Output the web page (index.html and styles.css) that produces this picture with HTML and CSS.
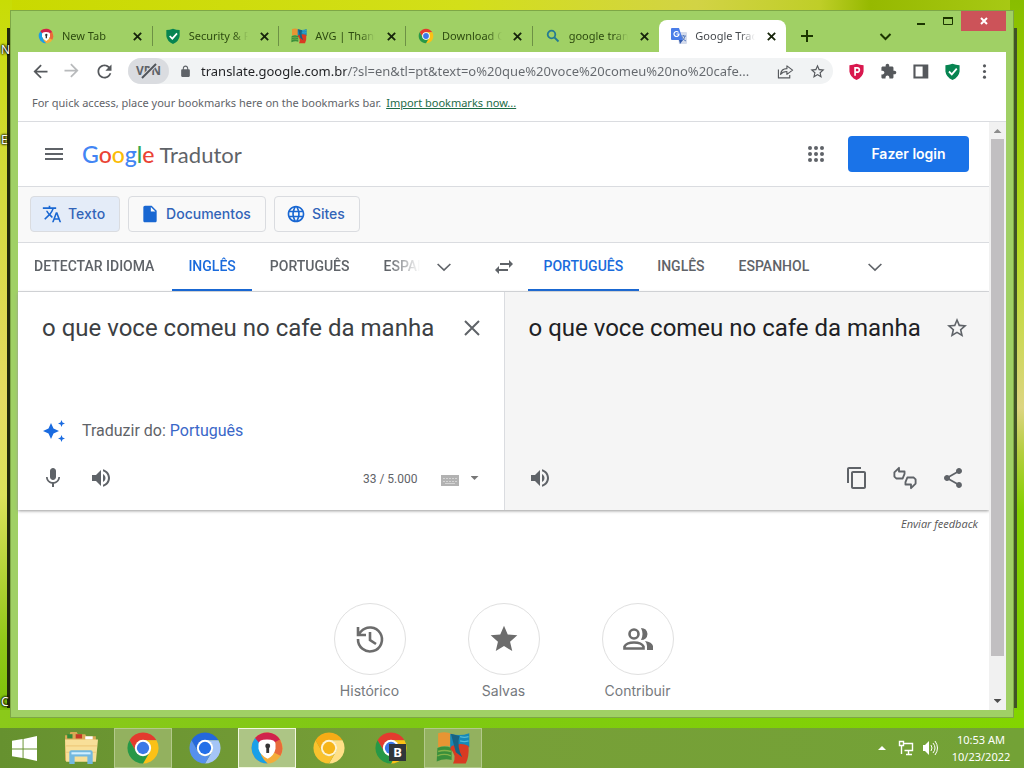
FILE: index.html
```html
<!DOCTYPE html>
<html lang="pt-BR">
<head>
<meta charset="utf-8">
<title>Google Tradutor</title>
<meta name="viewport" content="width=device-width, initial-scale=1">
<link rel="stylesheet" href="styles.css">
</head>
<body>
<svg class="sprite" aria-hidden="true">
  <symbol id="close" viewBox="0 0 24 24"><path d="M4 4l16 16M20 4L4 20" fill="none" stroke="currentColor" stroke-width="4"/></symbol>
  <symbol id="down" viewBox="0 0 24 24"><path d="M3.500 8l8.500 8 8.500-8" fill="none" stroke="currentColor" stroke-width="2.200"/></symbol>
  <symbol id="arrow" viewBox="0 0 24 24"><path d="M20 11H7.830l5.590-5.590L12 4l-8 8 8 8 1.410-1.410L7.830 13H20z"/></symbol>
  <symbol id="wheel" viewBox="0 0 48 48">
    <path d="M24 13H43.050A22 22 0 0 0 4.950 13L14.470 29.500A11 11 0 0 1 24 13z" fill="var(--a)"/>
    <path d="M24 13H43.050A22 22 0 0 0 4.950 13L14.470 29.500A11 11 0 0 1 24 13z" fill="var(--b)" transform="rotate(120 24 24)"/>
    <path d="M24 13H43.050A22 22 0 0 0 4.950 13L14.470 29.500A11 11 0 0 1 24 13z" fill="var(--c)" transform="rotate(240 24 24)"/>
    <circle cx="24" cy="24" r="11.500" fill="var(--ring)"/><circle cx="24" cy="24" r="8.700" fill="var(--core)"/>
  </symbol>
  <symbol id="secure" viewBox="0 0 48 48">
    <circle cx="24" cy="24" r="22" fill="#f3ad3a"/>
    <path d="M7 10A22 22 0 0 1 43 13L36 20Q24 8 12 18z" fill="#d0234c"/>
    <path d="M7 10Q-3 24 7 38Q14 46 25 46Q12 36 14 18z" fill="#18a0e8"/>
    <path d="M42 12Q49 24 43 35L33 30L35 16z" fill="#e86a3b"/>
    <path d="M12 18Q12 12 24 12Q36 12 36 18V25Q34 35 25 39Q14 34 12 25z" fill="#fff"/>
    <circle cx="25" cy="21" r="3.500" fill="#333"/><path d="M23 22h4v9h-4z" fill="#333"/>
  </symbol>
  <symbol id="shield" viewBox="0 0 24 24"><path d="M12 1Q17 3 22 3V12Q21 20 12 24Q3 20 2 12V3Q7 3 12 1z" fill="var(--a)"/></symbol>
  <symbol id="avg" viewBox="0 0 48 48">
    <path d="M3 3Q14 0 22 4V22Q13 19 3 23z" fill="#e89533"/><path d="M20 4Q34 8 47 3V23Q36 21 20 24z" fill="#1689b8"/>
    <path d="M2 24Q12 20 22 24V41Q12 38 1 43z" fill="#398f3b"/><path d="M22 21Q36 16 46 21Q47 36 42 46H24Q30 34 20 25z" fill="#d93a22"/>
    <path d="M21 4L33 7Q29 22 37 37L28 30z" fill="#186282"/>
    <path d="M3 29Q12 26 21 29M2 35Q12 31 21 35" stroke="#83b349" stroke-width="2" fill="none"/>
    <path d="M34 8Q40 10 46 8M34 14Q40 16 46 14" stroke="#52bad5" stroke-width="2" fill="none"/>
  </symbol>
  <symbol id="star-line" viewBox="0 0 24 24"><path d="M22 9.240l-7.190-.620L12 2 9.190 8.630 2 9.240l5.460 4.730L5.820 21 12 17.270 18.180 21l-1.630-7.030L22 9.240zM12 15.400l-3.760 2.270 1-4.280-3.320-2.880 4.380-.380L12 6.100l1.710 4.040 4.380.380-3.320 2.880 1 4.280L12 15.400z"/></symbol>
  <symbol id="volume" viewBox="0 0 24 24"><path d="M3 9v6h4l5 5V4L7 9H3zm13.500 3c0-1.770-1.020-3.290-2.500-4.030v8.050c1.480-.730 2.500-2.250 2.500-4.020zM14 3.230v2.060c2.890.860 5 3.540 5 6.710s-2.110 5.850-5 6.710v2.060c4.010-.910 7-4.490 7-8.770s-2.990-7.860-7-8.770z"/></symbol>
</svg>

<div class="desktop">
  <div class="backdrop" aria-hidden="true"></div>
  <span class="desk-label label-one">N</span>
  <span class="desk-label label-two">E</span>
  <span class="desk-label label-three">C</span>

  <section class="window">
    <header class="titlebar">
      <div class="tabs" role="tablist">
        <div class="tab" role="tab"><svg class="favicon"><use href="#secure"/></svg><span class="tab-title">New Tab</span><button class="tab-close" aria-label="Close tab"><svg><use href="#close"/></svg></button></div>
        <div class="tab" role="tab"><svg class="favicon green-shield" viewBox="0 0 24 24"><use href="#shield"/><path d="M7 12l4 4 7-8" fill="none" stroke="#fff" stroke-width="2.500"/></svg><span class="tab-title">Security &amp; F</span><button class="tab-close" aria-label="Close tab"><svg><use href="#close"/></svg></button></div>
        <div class="tab" role="tab"><svg class="favicon"><use href="#avg"/></svg><span class="tab-title">AVG | Thank</span><button class="tab-close" aria-label="Close tab"><svg><use href="#close"/></svg></button></div>
        <div class="tab" role="tab"><svg class="favicon chrome"><use href="#wheel"/></svg><span class="tab-title">Download C</span><button class="tab-close" aria-label="Close tab"><svg><use href="#close"/></svg></button></div>
        <div class="tab no-line" role="tab"><svg class="favicon" viewBox="0 0 16 16" fill="none" stroke="#247b92" stroke-width="1.800"><circle cx="6.500" cy="6.500" r="3.800"/><path d="M9.500 9.500l4 4"/></svg><span class="tab-title">google trans</span><button class="tab-close" aria-label="Close tab"><svg><use href="#close"/></svg></button></div>
        <div class="tab active" role="tab" aria-selected="true"><svg class="favicon" viewBox="0 0 16 16"><path d="M6 4h9q1 0 1 1v10q0 1-1 1H8z" fill="#d5dcec"/><path d="M1 0h7l4 12H1q-1 0-1-1V1q0-1 1-1z" fill="#4a7de8"/><path d="M8 12h4l-3 4z" fill="#3059ac"/><path d="M7.500 4.500A2.500 2.500 0 1 0 8 6H5.500" fill="none" stroke="#fff" stroke-width="1.200"/><path d="M10 8h5M12.500 7v1M14 8q-1 4-3 5M11 9q1 3 4 4" stroke="#5b7ebe" fill="none"/></svg><span class="tab-title">Google Trad</span><button class="tab-close" aria-label="Close tab"><svg><use href="#close"/></svg></button></div>
      </div>
      <button class="new-tab" aria-label="New tab"><svg viewBox="0 0 12 12"><path d="M6 0v12M0 6h12" stroke="currentColor" stroke-width="2"/></svg></button>
      <button class="tab-search" aria-label="Search tabs"><svg viewBox="0 0 12 12"><path d="M2 4l4 4 4-4" fill="none" stroke="currentColor" stroke-width="1.600"/></svg></button>
      <div class="window-controls">
        <button aria-label="Minimize"><svg viewBox="0 0 12 12"><path d="M2 9h8" stroke="currentColor" stroke-width="2"/></svg></button>
        <button aria-label="Maximize"><svg viewBox="0 0 12 12"><path d="M1.500 2.500h9v7h-9z" fill="none" stroke="currentColor"/><path d="M1 3h10" stroke="currentColor" stroke-width="2"/></svg></button>
        <button class="window-close" aria-label="Close"><svg viewBox="0 0 12 12"><path d="M3 3l6 6M9 3L3 9" stroke="currentColor" stroke-width="2"/></svg></button>
      </div>
    </header>

    <div class="browser">
      <nav class="toolbar" aria-label="Browser">
        <button class="tool" aria-label="Back"><svg><use href="#arrow"/></svg></button>
        <button class="tool forward" aria-label="Forward"><svg><use href="#arrow"/></svg></button>
        <button class="tool" aria-label="Reload"><svg viewBox="0 0 24 24"><path d="M17.650 6.350C16.200 4.900 14.210 4 12 4c-4.420 0-7.990 3.580-7.990 8s3.570 8 7.990 8c3.730 0 6.840-2.550 7.730-6h-2.080c-.820 2.330-3.040 4-5.650 4-3.310 0-6-2.690-6-6s2.690-6 6-6c1.660 0 3.140.690 4.220 1.780L13 11h7V4l-2.350 2.350z"/></svg></button>
        <div class="omnibox">
          <button class="vpn">VPN<svg viewBox="0 0 24 16"><path d="M5 15L19 1" stroke="#dadce0" stroke-width="4"/><path d="M5 15L19 1" stroke="#50545a" stroke-width="2"/></svg></button>
          <svg class="lock" viewBox="0 0 24 24"><path d="M18 8h-1V6c0-2.760-2.240-5-5-5S7 3.240 7 6v2H6c-1.100 0-2 .900-2 2v10c0 1.100.900 2 2 2h12c1.100 0 2-.900 2-2V10c0-1.100-.900-2-2-2zM9 6c0-1.660 1.340-3 3-3s3 1.340 3 3v2H9V6z"/></svg>
          <input class="url" type="text" aria-label="Address" value="translate.google.com.br/?sl=en&amp;tl=pt&amp;text=o%20que%20voce%20comeu%20no%20cafe...">
          <button class="tool" aria-label="Share page"><svg viewBox="0 0 24 24" fill="none" stroke="currentColor" stroke-width="1.600"><path d="M2 9v12h16v-4M14 4l8 6-8 6v-4q-6 0-9 4Q6 8 14 8z" stroke-linejoin="round"/></svg></button>
          <button class="tool" aria-label="Bookmark"><svg><use href="#star-line"/></svg></button>
        </div>
        <button class="tool" aria-label="Privacy blocker"><svg class="red-shield" viewBox="0 0 24 24"><use href="#shield"/><path d="M10 18V7h3a2.800 2.800 0 0 1 0 6h-3" fill="none" stroke="#fff" stroke-width="2.400"/></svg></button>
        <button class="tool" aria-label="Extensions"><svg viewBox="0 0 24 24"><path d="M20.500 11H19V7c0-1.100-.900-2-2-2h-4V3.500C13 2.120 11.880 1 10.500 1S8 2.120 8 3.500V5H4c-1.100 0-1.990.900-1.990 2v3.800H3.500c1.490 0 2.700 1.210 2.700 2.700s-1.210 2.700-2.700 2.700H2V20c0 1.100.900 2 2 2h3.800v-1.500c0-1.490 1.210-2.700 2.700-2.700 1.490 0 2.700 1.210 2.700 2.700V22H17c1.100 0 2-.900 2-2v-4h1.500c1.380 0 2.500-1.120 2.500-2.500S21.880 11 20.500 11z"/></svg></button>
        <button class="tool" aria-label="Side panel"><svg viewBox="0 0 24 24"><path d="M2 2h21v20H2zM5 5v14h10V5z" fill-rule="evenodd"/></svg></button>
        <button class="tool" aria-label="Security"><svg class="green-shield" viewBox="0 0 24 24"><use href="#shield"/><path d="M7 12l4 4 7-8" fill="none" stroke="#fff" stroke-width="2.500"/></svg></button>
        <button class="tool" aria-label="Menu"><svg viewBox="0 0 24 24"><circle cx="12" cy="4" r="2.200"/><circle cx="12" cy="12" r="2.200"/><circle cx="12" cy="20" r="2.200"/></svg></button>
      </nav>
      <div class="bookmarks"><span>For quick access, place your bookmarks here on the bookmarks bar.</span><a href="#import">Import bookmarks now...</a></div>

      <div class="viewport">
        <main class="page">
          <header class="page-head">
            <button class="menu" aria-label="Menu principal"><svg viewBox="0 0 24 24"><path d="M3 18h18v-2H3zm0-5h18v-2H3zm0-7v2h18V6z"/></svg></button>
            <a class="brand" href="#home"><span class="google"><span class="blue">G</span><span class="red">o</span><span class="yellow">o</span><span class="blue">g</span><span class="green">l</span><span class="red">e</span></span><span class="product">Tradutor</span></a>
            <button class="apps" aria-label="Google Apps"><svg viewBox="0 0 24 24"><g id="row"><circle cx="6" cy="6" r="2"/><circle cx="12" cy="6" r="2"/><circle cx="18" cy="6" r="2"/></g><use href="#row" y="6"/><use href="#row" y="12"/></svg></button>
            <button class="login">Fazer login</button>
          </header>

          <nav class="modes" aria-label="Tipo de tradução">
            <button class="mode selected"><svg viewBox="0 0 24 24"><path d="M12.870 15.070l-2.540-2.510.030-.030c1.740-1.940 2.980-4.170 3.710-6.530H17V4h-7V2H8v2H1v1.990h11.170C11.500 7.920 10.440 9.750 9 11.350 8.070 10.320 7.300 9.190 6.690 8h-2c.730 1.630 1.730 3.170 2.980 4.560l-5.090 5.020L4 19l5-5 3.110 3.110.760-2.040zM18.500 10h-2L12 22h2l1.120-3h4.750L21 22h2l-4.500-12zm-2.620 7l1.620-4.330L19.120 17h-3.240z"/></svg>Texto</button>
            <button class="mode"><svg viewBox="0 0 24 24"><path d="M6 2c-1.100 0-1.990.900-1.990 2L4 20c0 1.100.890 2 1.990 2H18c1.100 0 2-.900 2-2V8l-6-6H6zm7 7V3.500L18.500 9H13z"/></svg>Documentos</button>
            <button class="mode"><svg viewBox="0 0 24 24"><path d="M11.990 2C6.470 2 2 6.480 2 12s4.470 10 9.990 10C17.520 22 22 17.520 22 12S17.520 2 11.990 2zm6.930 6h-2.950c-.320-1.250-.780-2.450-1.380-3.560 1.840.630 3.370 1.910 4.330 3.560zM12 4.040c.830 1.200 1.480 2.530 1.910 3.960h-3.820c.430-1.430 1.080-2.760 1.910-3.960zM4.260 14C4.100 13.360 4 12.690 4 12s.100-1.360.260-2h3.380c-.080.660-.140 1.320-.140 2 0 .680.060 1.340.140 2H4.260zm.820 2h2.950c.320 1.250.780 2.450 1.380 3.560-1.840-.630-3.370-1.900-4.330-3.560zm2.950-8H5.080c.960-1.660 2.490-2.930 4.330-3.560C8.810 5.550 8.350 6.750 8.030 8zM12 19.960c-.830-1.200-1.480-2.530-1.910-3.960h3.820c-.430 1.430-1.080 2.760-1.910 3.960zM14.340 14H9.660c-.090-.660-.160-1.320-.160-2 0-.680.070-1.350.160-2h4.680c.090.650.160 1.320.160 2 0 .680-.070 1.340-.160 2zm.250 5.560c.600-1.110 1.060-2.310 1.380-3.560h2.950c-.960 1.650-2.490 2.930-4.330 3.560zM16.360 14c.080-.660.140-1.320.140-2 0-.680-.060-1.340-.140-2h3.380c.160.640.260 1.310.260 2s-.100 1.360-.260 2h-3.380z"/></svg>Sites</button>
          </nav>

          <div class="languages">
            <div class="source-languages">
              <div class="language-list faded">
                <button class="language">DETECTAR IDIOMA</button><button class="language current">INGLÊS</button><button class="language">PORTUGUÊS</button><button class="language">ESPANHOL</button>
              </div>
              <button class="more" aria-label="Mais idiomas de origem"><svg><use href="#down"/></svg></button>
            </div>
            <button class="swap" aria-label="Trocar idiomas"><svg viewBox="0 0 24 24"><path d="M6.990 11L3 15l3.990 4v-3H16v-2H6.990zM21 9l-3.990-4v3H8v2h9.010v3z"/></svg></button>
            <div class="target-languages">
              <div class="language-list">
                <button class="language current">PORTUGUÊS</button><button class="language">INGLÊS</button><button class="language">ESPANHOL</button>
              </div>
              <button class="more" aria-label="Mais idiomas de destino"><svg><use href="#down"/></svg></button>
            </div>
          </div>

          <div class="panels">
            <section class="panel source">
              <div class="entry">
                <textarea class="text" aria-label="Texto original" rows="2">o que voce comeu no cafe da manha</textarea>
                <button class="icon" aria-label="Limpar"><svg viewBox="0 0 24 24"><path d="M5 5l14 14M19 5L5 19" stroke="currentColor" stroke-width="2"/></svg></button>
              </div>
              <p class="suggest"><svg viewBox="0 0 24 24"><path d="M19.500 8l1-2.500L23 4.500l-2.500-1L19.500 1l-1 2.500-2.500 1 2.500 1zM11.500 9.500L9 4 6.500 9.500 1 12l5.500 2.500L9 20l2.500-5.500L17 12zM19.500 16l-1 2.500-2.500 1 2.500 1 1 2.500 1-2.500 2.500-1-2.500-1z"/></svg><span>Traduzir do: <a href="#pt">Português</a></span></p>
              <div class="actions">
                <button class="icon" aria-label="Traduzir por voz"><svg viewBox="0 0 24 24"><path d="M12 14c1.660 0 2.990-1.340 2.990-3L15 5c0-1.660-1.340-3-3-3S9 3.340 9 5v6c0 1.660 1.340 3 3 3zm5.300-3c0 3-2.540 5.100-5.300 5.100S6.700 14 6.700 11H5c0 3.410 2.720 6.230 6 6.720V21h2v-3.280c3.280-.480 6-3.300 6-6.720h-1.700z"/></svg></button>
                <button class="icon" aria-label="Ouvir"><svg><use href="#volume"/></svg></button>
                <span class="count">33 / 5.000</span>
                <button class="keyboard" aria-label="Teclado"><svg viewBox="0 0 18 11"><path d="M0 0h18v11H0z" fill="#b2b2b2"/><path d="M2 3.500h14M2 6.500h14" stroke="#d4d4d4" stroke-dasharray="2 1"/><path d="M4 8.500h10" stroke="#d4d4d4"/></svg></button>
                <button class="caret" aria-label="Opções do teclado"></button>
              </div>
            </section>
            <section class="panel target">
              <div class="entry">
                <p class="text">o que voce comeu no cafe da manha</p>
                <button class="icon" aria-label="Salvar tradução"><svg><use href="#star-line"/></svg></button>
              </div>
              <div class="actions">
                <button class="icon" aria-label="Ouvir tradução"><svg><use href="#volume"/></svg></button>
                <span class="spacer"></span>
                <button class="icon" aria-label="Copiar"><svg viewBox="0 0 24 24"><path d="M16 1H4c-1.100 0-2 .900-2 2v14h2V3h12V1zm3 4H8c-1.100 0-2 .900-2 2v14c0 1.100.900 2 2 2h11c1.100 0 2-.900 2-2V7c0-1.100-.900-2-2-2zm0 16H8V7h11v14z"/></svg></button>
                <button class="icon" aria-label="Avaliar"><svg viewBox="0 0 26 26" fill="none" stroke="currentColor" stroke-width="2" stroke-linejoin="round"><path d="M1.500 7l5-5v4h6v2.500l-2 5h-7l-2-2zM24.500 19l-5 5v-4h-6v-2.500l2-5h7l2 2z"/></svg></button>
                <button class="icon" aria-label="Compartilhar"><svg viewBox="0 0 24 24"><path d="M18 16.080c-.760 0-1.440.300-1.960.770L8.910 12.700c.050-.230.090-.460.090-.700s-.040-.470-.090-.700l7.050-4.110c.540.500 1.250.810 2.040.810 1.660 0 3-1.340 3-3s-1.340-3-3-3-3 1.340-3 3c0 .240.040.470.090.700L8.040 9.810C7.500 9.310 6.790 9 6 9c-1.660 0-3 1.340-3 3s1.340 3 3 3c.790 0 1.500-.310 2.040-.810l7.120 4.160c-.050.210-.080.430-.080.650 0 1.610 1.310 2.920 2.920 2.920s2.920-1.310 2.920-2.920-1.310-2.920-2.920-2.920z"/></svg></button>
              </div>
            </section>
          </div>
          <a class="feedback" href="#feedback">Enviar feedback</a>

          <nav class="shortcuts" aria-label="Atalhos">
            <a class="shortcut" href="#historico"><span class="disc"><svg viewBox="0 0 32 32" fill="none" stroke="currentColor" stroke-width="2.600"><path d="M4 16A12 12 0 1 0 7 8.500L4 12M4 4v8h8M16 9v8l6 4"/></svg></span>Histórico</a>
            <a class="shortcut" href="#salvas"><span class="disc"><svg viewBox="0 0 24 24"><path d="M12 17.270L18.180 21l-1.640-7.030L22 9.240l-7.190-.610L12 2 9.190 8.630 2 9.240l5.460 4.730L5.820 21z"/></svg></span>Salvas</a>
            <a class="shortcut" href="#contribuir"><span class="disc"><svg viewBox="0 0 32 32"><g fill="none" stroke="currentColor" stroke-width="2.600"><circle cx="12" cy="11" r="4.500"/><path d="M2.500 25.500v-2q2-4 9.500-4t9.500 4v2z"/></g><path d="M19 5q6 0 6.500 6-.500 6-6.500 6 3-6 0-12zM23 18q7 1 8 5v4h-6v-4q0-3-2-5z"/></svg></span>Contribuir</a>
          </nav>
        </main>
        <div class="scrollbar" aria-hidden="true"><span class="scroll-up"></span><span class="thumb"></span><span class="scroll-down"></span></div>
      </div>
    </div>
  </section>
</div>

<footer class="taskbar">
  <button class="start" aria-label="Start"><svg viewBox="0 0 28 26"><path d="M1 5l11-2v10H1zM13 3l14-3v13H13zM1 14h11v9L1 21zM13 14h14v12l-14-3z"/></svg></button>
  <button class="task" aria-label="File Explorer"><svg viewBox="0 0 32 32"><path d="M1 4h4l1-3h6l1 2h7l1 2h9v23H1z" fill="#d9a955"/><path d="M3 3h5v4H3z" fill="#348a39"/><path d="M11 3h6v4h-6z" fill="#c33b27"/><path d="M20 5h7v3h-7z" fill="#fff"/><path d="M1 8h31l-2 21H2z" fill="#f8df98"/><path d="M2 14h29M2 20h28" stroke="#edca7b"/><path d="M5 31V20q0-2 2-2h18q2 0 2 2v11h-5v-7H10v7z" fill="#73b8df"/><path d="M7 20h18v2H7z" fill="#d1efff"/></svg></button>
  <button class="task open" aria-label="Google Chrome"><svg class="chrome"><use href="#wheel"/></svg></button>
  <button class="task" aria-label="Chromium"><svg class="chromium"><use href="#wheel"/></svg></button>
  <button class="task open front" aria-label="AVG Secure Browser"><svg><use href="#secure"/></svg></button>
  <button class="task" aria-label="Chrome Canary"><svg class="canary"><use href="#wheel"/></svg></button>
  <button class="task" aria-label="Chrome Beta"><svg class="chrome"><use href="#wheel"/></svg><span class="badge">B</span></button>
  <button class="task open" aria-label="AVG"><svg><use href="#avg"/></svg></button>
  <div class="tray">
    <button class="tray-icon" aria-label="Show hidden icons"><svg viewBox="0 0 16 16"><path d="M4 10l4-4 4 4z"/></svg></button>
    <button class="tray-icon" aria-label="Network"><svg viewBox="0 0 16 16" fill="none" stroke="#fff"><path d="M5.500 3.500h9v7h-8M8 14.500h6M10.500 11v3M1.500 1.500h4v4h-4zM3.500 6v8" stroke-width="1.400"/></svg></button>
    <button class="tray-icon" aria-label="Volume"><svg viewBox="0 0 16 16"><path d="M1 5h2l4-4v14l-4-4H1z"/><path d="M9 5q2 3 0 6M11 3q4 5 0 10M13 1q5 7 0 14" fill="none" stroke="#fff"/></svg></button>
    <time class="clock" datetime="2022-10-23T10:53"><span>10:53 AM</span><span>10/23/2022</span></time>
  </div>
</footer>
</body>
</html>
```

FILE: styles.css
```css
* { box-sizing: border-box; }

body {
  margin: 0;
  min-height: 100vh;
  display: flex;
  flex-direction: column;
  font-family: Roboto, sans-serif;
  color: #5f6368;
}

button {
  display: flex;
  align-items: center;
  justify-content: center;
  padding: 0;
  border: 0;
  background: none;
  font: inherit;
  color: inherit;
}

svg { flex: none; fill: currentColor; }
svg[fill="none"] { fill: none; }
p { margin: 0; }
.sprite { position: absolute; width: 0; height: 0; }

.chrome { --a: #e33b2e; --b: #fbc116; --c: #279847; --ring: #fff; --core: #3b78e7; }
.chromium { --a: #2468dc; --b: #a5c5f7; --c: #5690ec; --ring: #fff; --core: #2470e8; }
.canary { --a: #f6ac16; --b: #ffe087; --c: #fac22d; --ring: #fff3cf; --core: #f6b519; }
.green-shield { --a: #078451; }
.red-shield { --a: #d9184e; }

/* Desktop */
.desktop {
  position: relative;
  flex: 1;
  display: flex;
  padding: 10px;
  background:
    linear-gradient(90deg, #8bc91a, #7ec813 40%, #83d500) bottom / 100% 18px no-repeat,
    linear-gradient(#c8dc05, #d3da3c 25%, #e5db62 55%, #dce25b 68%, #93c719 88%, #76bd05) left / 12px 100% no-repeat,
    linear-gradient(#88bd00, #9ad000 15%, #b9dc28 35%, #ddd582 56%, #b5ce41 62%, #84d000 70%, #7cd000) right / 14px 100% no-repeat,
    linear-gradient(90deg, #c9d900, #d3df19 45%, #d2d345 68%, #bfce28 80%, #96b900 85%, #a9ca16);
}

.backdrop {
  position: absolute;
  inset: 28px 7px 20px;
  background: linear-gradient(90deg, #22280c, #405326);
}

.desk-label {
  position: absolute;
  left: 1px;
  font: 12px/16px "Noto Sans", sans-serif;
  color: #fff;
  text-shadow: 0 0 2px #000, 0 0 2px #000, 0 0 3px #000;
}
.label-one { top: 42px; }
.label-two { top: 132px; }
.label-three { top: 694px; }

.window {
  position: relative;
  flex: 1;
  min-width: 0;
  display: flex;
  flex-direction: column;
  padding: 0 7px 7px;
  border: 1px solid #7ea746;
  background: #a0d065;
}

.titlebar {
  display: flex;
  align-items: flex-end;
  height: 41px;
  padding-left: 8px;
  font: 11px/16px "Noto Sans", sans-serif;
  color: #1c3500;
}

.tabs { display: flex; flex: 0 1 760px; min-width: 0; }

.tab {
  position: relative;
  flex: 1 1 0;
  min-width: 0;
  display: flex;
  align-items: center;
  gap: 8px;
  height: 32px;
  padding: 0 7px 0 12px;
  color: #2d4b10;
}
.tab::after {
  content: "";
  position: absolute;
  right: 0;
  width: 1px;
  height: 20px;
  background: #6d9145;
}
.tab.no-line::after, .tab.active::after { display: none; }
.tab.active { border-radius: 8px 8px 0 0; background: #fff; color: #45494d; }

.favicon { width: 16px; height: 16px; }
.tab-title {
  flex: 1;
  min-width: 0;
  overflow: hidden;
  white-space: nowrap;
  mask-image: linear-gradient(90deg, #000 75%, transparent);
}
.tab-close { width: 16px; height: 16px; color: #17250b; }
.tab-close svg { width: 11px; height: 11px; }

.new-tab, .tab-search { width: 28px; height: 32px; flex: none; }
.new-tab { margin-left: 7px; }
.new-tab svg { width: 12px; height: 12px; }
.tab-search { margin-left: auto; margin-right: 8px; }
.tab-search svg { width: 15px; height: 15px; }

.window-controls { display: flex; align-self: flex-start; }
.window-controls button { width: 27px; height: 20px; }
.window-controls svg { width: 12px; height: 12px; }
.window-controls .window-close { width: 45px; background: #cc5359; color: #fff; }

/* Browser chrome */
.browser { flex: 1; display: flex; flex-direction: column; background: #fff; }

.toolbar { display: flex; align-items: center; height: 38px; padding: 0 6px; }
.tool { width: 32px; height: 26px; flex: none; color: #55585c; }
.tool svg { width: 17px; height: 17px; }
.tool:first-child svg, .forward svg, .forward + .tool svg { width: 21px; height: 21px; }
.forward { transform: rotate(180deg); color: #b8babc; }

.omnibox {
  flex: 1;
  min-width: 0;
  display: flex;
  align-items: center;
  height: 26px;
  margin: 0 7px 0 8px;
  border-radius: 13px;
  background: #f1f3f4;
}
.vpn {
  position: relative;
  width: 41px;
  height: 26px;
  border-radius: 13px;
  background: #dadce0;
  font: bold 12px/16px "Noto Sans", sans-serif;
}
.vpn svg { position: absolute; width: 24px; height: 16px; }
.lock { width: 13px; height: 13px; margin: 0 9px 0 10px; color: #5f6368; }
.url {
  flex: 1;
  min-width: 0;
  padding: 0;
  border: 0;
  outline: 0;
  font: 13px/20px "Noto Sans", sans-serif;
  color: #5f6368;
  background: linear-gradient(90deg, #202124 145px, #64686d 145px);
  background-clip: text;
  -webkit-text-fill-color: transparent;
}

.bookmarks {
  display: flex;
  gap: 5px;
  align-items: center;
  height: 32px;
  padding: 0 14px 6px;
  border-bottom: 1px solid #dadce0;
  font: 11px/16px "Noto Sans", sans-serif;
  white-space: nowrap;
}
.bookmarks a { color: #1d6b47; }

/* Translator page */
.viewport { flex: 1; display: flex; }
.page { flex: 1; min-width: 0; display: flex; flex-direction: column; }

.page-head {
  display: flex;
  align-items: center;
  height: 65px;
  padding: 0 20px 0 24px;
  border-bottom: 1px solid #dadce0;
}
.menu svg, .apps svg { width: 24px; height: 24px; }
.brand {
  display: flex;
  align-items: baseline;
  gap: 5px;
  margin-left: 16px;
  font: 22px/32px Lato, sans-serif;
  color: #5f6368;
  text-decoration: none;
}
.google { font-size: 23px; font-weight: 500; }
.blue { color: #4285f4; }
.red { color: #ea4335; }
.yellow { color: #fbbc05; }
.green { color: #34a853; }
.apps { margin-left: auto; }
.login {
  width: 121px;
  height: 36px;
  margin-left: 20px;
  border-radius: 4px;
  background: #1a73e8;
  color: #fff;
  font: 600 14px/20px Inter, sans-serif;
}

.modes {
  display: flex;
  gap: 8px;
  padding: 9px 12px 10px;
  border-bottom: 1px solid #dadce0;
  background: #f9f9f9;
}
.mode {
  gap: 6px;
  height: 36px;
  padding: 0 14px 0 11px;
  border: 1px solid #dadce0;
  border-radius: 4px;
  font: 500 14px/20px Inter, sans-serif;
  color: #3264b8;
}
.mode svg { width: 20px; height: 20px; color: #1967d2; }
.mode.selected { background: #e4ecf8; }

.languages { display: flex; height: 49px; border-bottom: 1px solid #dadce0; }
.source-languages, .target-languages { flex: 1 1 0; min-width: 0; display: flex; }
.language-list { display: flex; gap: 2px; min-width: 0; overflow: hidden; }
.language-list.faded { flex: 0 1 402px; mask-image: linear-gradient(90deg, #000 92%, transparent); }
.language {
  flex: none;
  padding: 0 16px;
  border-bottom: 2px solid transparent;
  font: 500 14px/20px Roboto, sans-serif;
}
.language.current { border-color: #1967d2; color: #1a6bdc; }
.more { width: 48px; flex: none; }
.more svg { width: 18px; height: 18px; }
.target-languages .more { margin-left: 26px; }
.swap { width: 48px; flex: none; }
.swap svg { width: 24px; height: 24px; }

.panels { display: grid; grid-template-columns: 1fr 1fr; min-height: 218px; box-shadow: 0 1px 3px #999; }
.panel { display: flex; flex-direction: column; min-width: 0; }
.target { border-left: 1px solid #dadce0; background: #f5f5f5; }

.entry { display: flex; padding: 20px 8px 0 24px; }
.text {
  flex: 1;
  min-width: 0;
  padding: 0;
  border: 0;
  outline: 0;
  resize: none;
  overflow: hidden;
  background: none;
  font: 24px/32px Roboto, sans-serif;
  color: #3c4043;
}
.target .text { color: #202124; }
.icon { width: 48px; height: 32px; flex: none; }
.icon svg { width: 24px; height: 24px; }

.suggest {
  display: flex;
  align-items: center;
  gap: 16px;
  margin-top: auto;
  padding-left: 24px;
  font-size: 16px;
  line-height: 24px;
}
.suggest svg { width: 24px; height: 24px; color: #1a6be0; }
.suggest a { color: #3a67c8; text-decoration: none; }

.actions { display: flex; align-items: center; margin-top: auto; padding: 0 12px 16px 11px; }
.source .actions { margin-top: 19px; }
.count { margin-left: auto; padding-top: 2px; font-size: 12px; line-height: 16px; }
.keyboard { margin-left: 23px; padding-top: 4px; }
.keyboard svg { width: 18px; height: 11px; }
.caret { width: 8px; height: 4px; margin: 0 13px 0 12px; background: #777; clip-path: polygon(0 0, 100% 0, 50% 100%); }
.spacer { flex: 1; }

.feedback {
  align-self: flex-end;
  margin: 5px 11px 0;
  font: italic 11px/18px "Open Sans", sans-serif;
  color: #555;
  text-decoration: none;
}

.shortcuts { display: flex; justify-content: center; gap: 62px; margin-top: 70px; }
.shortcut {
  display: flex;
  flex-direction: column;
  align-items: center;
  gap: 6px;
  width: 72px;
  font: 14px/20px Inter, sans-serif;
  color: #76797d;
  text-decoration: none;
}
.disc { display: flex; align-items: center; justify-content: center; width: 72px; height: 72px; border: 1px solid #e0e0e0; border-radius: 50%; color: #6c6c6c; }
.disc svg { width: 32px; height: 32px; }

.scrollbar { display: flex; flex-direction: column; align-items: center; width: 17px; background: #f1f1f1; }
.scroll-up, .scroll-down { width: 8px; height: 4px; margin: 7px 0 6px; background: #8c8c8c; clip-path: polygon(50% 0, 100% 100%, 0 100%); }
.scroll-down { margin: auto 0 7px; background: #4d4d4d; clip-path: polygon(0 0, 100% 0, 50% 100%); }
.thumb { width: 13px; height: 88%; background: #c1bfc1; }

/* Taskbar */
.taskbar { display: flex; height: 40px; background: linear-gradient(90deg, #66912f, #789f38 40%, #73a236); color: #fff; }
.start { width: 48px; margin-right: 4px; }
.start svg { width: 27px; height: 25px; }
.task { position: relative; width: 58px; margin-right: 4px; border: 1px solid transparent; }
.task svg { width: 34px; height: 34px; }
.task.open { border-color: #b3c98b; background: #93b15f; }
.task.front { border-color: #f1f7df; background: #adc585; }
.badge { position: absolute; right: 13px; bottom: 6px; width: 17px; height: 17px; background: #30363a; font: bold 13px/17px "Noto Sans", sans-serif; }
.tray { display: flex; align-items: center; margin-left: auto; padding-right: 13px; }
.tray-icon { width: 24px; height: 40px; }
.tray-icon svg { width: 16px; height: 16px; }
.clock { display: flex; flex-direction: column; align-items: center; width: 60px; margin-left: 9px; font: 11px/17px "Noto Sans", sans-serif; white-space: nowrap; }
```
